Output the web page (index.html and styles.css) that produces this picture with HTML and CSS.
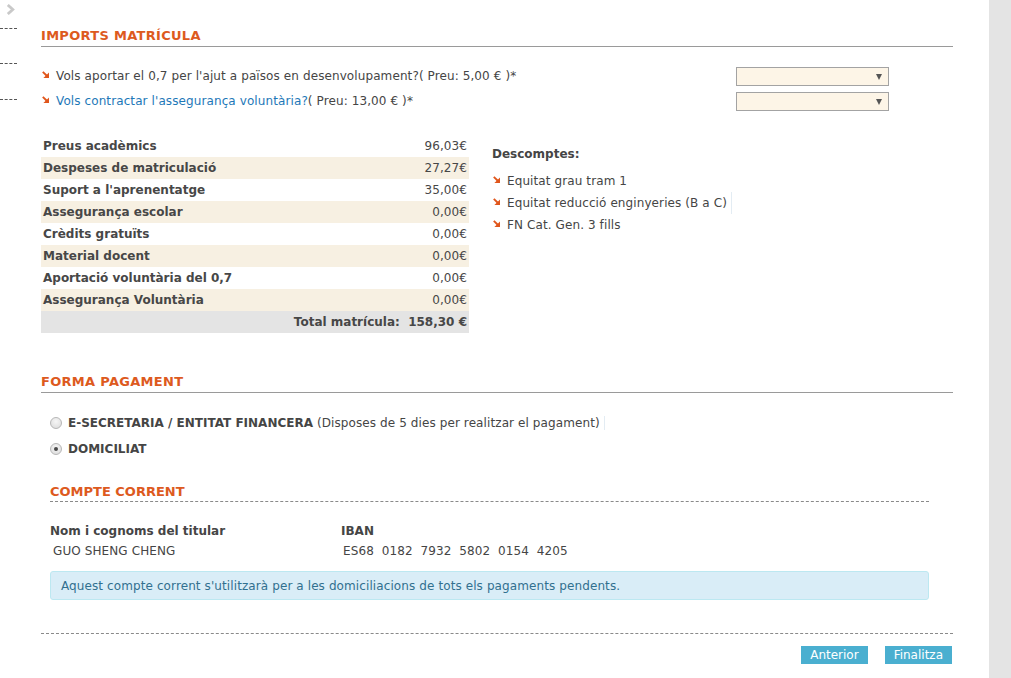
FILE: index.html
```html
<!DOCTYPE html>
<html lang="ca">
<head>
<meta charset="utf-8">
<title>Imports matrícula</title>
<link rel="stylesheet" href="styles.css">
</head>
<body>
<div class="page">
  <aside class="rail">
    <svg class="rail-chevron" width="9" height="11" viewBox="0 0 9 11"><path d="M1.8 1 L6.8 5.5 L1.8 10" fill="none" stroke="#c9c9c9" stroke-width="2.8"/></svg>
    <div class="rail-dash rail-dash-1"></div>
    <div class="rail-dash rail-dash-2"></div>
    <div class="rail-dash rail-dash-3"></div>
  </aside>

  <main class="main">
    <h2 class="section-title">IMPORTS MATRÍCULA</h2>

    <div class="question">
      <div class="question-text"><svg class="arrow" width="7" height="7" viewBox="0 0 7 7"><path d="M0.8 0.8 L5 5" stroke="#e0561c" stroke-width="1.9"/><path d="M7 1.4 L7 7 L1.4 7 Z" fill="#e0561c"/></svg>Vols aportar el 0,7 per l'ajut a països en desenvolupament?( Preu: 5,00 € )*</div>
      <div class="select"><span class="select-caret"></span></div>
    </div>
    <div class="question">
      <div class="question-text"><svg class="arrow" width="7" height="7" viewBox="0 0 7 7"><path d="M0.8 0.8 L5 5" stroke="#e0561c" stroke-width="1.9"/><path d="M7 1.4 L7 7 L1.4 7 Z" fill="#e0561c"/></svg><span class="link">Vols contractar l'assegurança voluntària?</span>( Preu: 13,00 € )*</div>
      <div class="select"><span class="select-caret"></span></div>
    </div>

    <div class="summary">
      <table class="prices">
        <tr><th>Preus acadèmics</th><td>96,03€</td></tr>
        <tr class="alt"><th>Despeses de matriculació</th><td>27,27€</td></tr>
        <tr><th>Suport a l'aprenentatge</th><td>35,00€</td></tr>
        <tr class="alt"><th>Assegurança escolar</th><td>0,00€</td></tr>
        <tr><th>Crèdits gratuïts</th><td>0,00€</td></tr>
        <tr class="alt"><th>Material docent</th><td>0,00€</td></tr>
        <tr><th>Aportació voluntària del 0,7</th><td>0,00€</td></tr>
        <tr class="alt"><th>Assegurança Voluntària</th><td>0,00€</td></tr>
        <tr class="total"><td colspan="2">Total matrícula:&nbsp; 158,30 €</td></tr>
      </table>

      <div class="discounts">
        <div class="discounts-title">Descomptes:</div>
        <ul class="discount-list">
          <li><svg class="arrow" width="7" height="7" viewBox="0 0 7 7"><path d="M0.8 0.8 L5 5" stroke="#e0561c" stroke-width="1.9"/><path d="M7 1.4 L7 7 L1.4 7 Z" fill="#e0561c"/></svg>Equitat grau tram 1</li>
          <li><svg class="arrow" width="7" height="7" viewBox="0 0 7 7"><path d="M0.8 0.8 L5 5" stroke="#e0561c" stroke-width="1.9"/><path d="M7 1.4 L7 7 L1.4 7 Z" fill="#e0561c"/></svg><span class="edge">Equitat reducció enginyeries (B a C)</span></li>
          <li><svg class="arrow" width="7" height="7" viewBox="0 0 7 7"><path d="M0.8 0.8 L5 5" stroke="#e0561c" stroke-width="1.9"/><path d="M7 1.4 L7 7 L1.4 7 Z" fill="#e0561c"/></svg>FN Cat. Gen. 3 fills</li>
        </ul>
      </div>
    </div>

    <h2 class="section-title section-title-pay">FORMA PAGAMENT</h2>

    <div class="radios">
      <label class="radio-row"><span class="radio"></span><span class="edge"><b>E-SECRETARIA / ENTITAT FINANCERA</b> (Disposes de 5 dies per realitzar el pagament)</span></label>
      <label class="radio-row"><span class="radio radio-checked"></span><b>DOMICILIAT</b></label>
    </div>

    <section class="account">
      <h3 class="account-title">COMPTE CORRENT</h3>
      <div class="account-grid">
        <div class="account-label">Nom i cognoms del titular</div>
        <div class="account-label">IBAN</div>
        <div class="account-value">GUO SHENG CHENG</div>
        <div class="account-value iban">ES68&nbsp; 0182&nbsp; 7932&nbsp; 5802&nbsp; 0154&nbsp; 4205</div>
      </div>
      <div class="info">Aquest compte corrent s'utilitzarà per a les domiciliacions de tots els pagaments pendents.</div>
    </section>

    <div class="actions">
      <button class="btn">Anterior</button>
      <button class="btn">Finalitza</button>
    </div>
  </main>

  <div class="gutter"></div>
  <div class="scrollbar"></div>
</div>
</body>
</html>
```

FILE: styles.css
```css
* { box-sizing: border-box; }

html, body {
  margin: 0;
  padding: 0;
  background: #fff;
}

body {
  font-family: "DejaVu Sans", Verdana, sans-serif;
  font-size: 12px;
  letter-spacing: 0.1px;
  color: #454545;
}

b, th, .account-label, .discounts-title {
  letter-spacing: 0;
}

.page {
  display: flex;
  width: 1011px;
  min-height: 678px;
}

.rail {
  width: 41px;
  flex: none;
}

.rail-chevron {
  display: block;
  margin: 4px 0 0 6px;
}

.rail-dash {
  width: 17px;
  border-top: 1px dashed #555;
}

.rail-dash-1 { margin-top: 13px; }
.rail-dash-2 { margin-top: 34px; }
.rail-dash-3 { margin-top: 35px; }

.main {
  width: 912px;
  flex: none;
  padding-bottom: 14px;
}

.gutter {
  width: 36px;
  flex: none;
}

.scrollbar {
  width: 22px;
  flex: none;
  background: #e4e4e4;
}

.section-title {
  margin: 28px 0 0;
  padding-bottom: 2px;
  font-size: 13px;
  line-height: 16px;
  letter-spacing: 0.3px;
  font-weight: bold;
  color: #dd5a1e;
  border-bottom: 1px solid #9a9a9a;
}

.question {
  display: flex;
  align-items: center;
  height: 25px;
}

.section-title + .question {
  margin-top: 16px;
}

.question-text {
  flex: 1;
  display: flex;
  align-items: flex-start;
}

.arrow {
  flex: none;
  margin: 2px 7px 0 1px;
}

.link {
  color: #1e78b8;
}

.select {
  width: 153px;
  height: 19px;
  margin: 1px 64px 0 0;
  border: 1px solid #a3a3a3;
  background: #fdf5e7;
  position: relative;
}

.select-caret {
  position: absolute;
  right: 6px;
  top: 6px;
  width: 0;
  height: 0;
  border-left: 3.5px solid transparent;
  border-right: 3.5px solid transparent;
  border-top: 6px solid #555;
}

.summary {
  display: flex;
  align-items: flex-start;
  margin-top: 22px;
}

.prices {
  width: 428px;
  border-collapse: collapse;
  flex: none;
}

.prices th,
.prices td {
  height: 22px;
  padding: 0 2px;
  color: #474747;
}

.prices th {
  text-align: left;
  font-weight: bold;
}

.prices td {
  text-align: right;
}

.prices .alt {
  background: #f7f0e2;
}

.prices .total {
  background: #e4e4e4;
}

.prices .total td {
  font-weight: bold;
  letter-spacing: 0;
}

.discounts {
  margin: 8px 0 0 23px;
}

.discounts-title {
  font-weight: bold;
  line-height: 22px;
}

.discount-list {
  list-style: none;
  margin: 5px 0 0;
  padding: 0;
}

.discount-list li {
  display: flex;
  align-items: flex-start;
  line-height: 22px;
}

.discount-list .arrow {
  margin-top: 6px;
}

.edge {
  border-right: 1px solid #e3ecf3;
  padding-right: 4px;
}

.section-title-pay {
  margin-top: 41px;
}

.radios {
  margin: 17px 0 0 9px;
}

.radio-row {
  display: flex;
  align-items: center;
  height: 26px;
}

.radio {
  width: 12px;
  height: 12px;
  border-radius: 50%;
  border: 1px solid #b7b7b7;
  background: radial-gradient(circle at 50% 35%, #f6f6f6 0%, #e2e2e2 70%, #d6d6d6 100%);
  margin-right: 6px;
  flex: none;
  position: relative;
}

.radio-checked::after {
  content: "";
  position: absolute;
  left: 3px;
  top: 3px;
  width: 4px;
  height: 4px;
  border-radius: 50%;
  background: #4a4a4a;
}

.account {
  margin: 22px 24px 0 9px;
}

.account-title {
  margin: 0;
  padding-bottom: 1px;
  font-size: 13px;
  line-height: 16px;
  letter-spacing: 0;
  font-weight: bold;
  color: #dd5a1e;
  border-bottom: 1px dashed #8a8a8a;
}

.account-grid {
  display: grid;
  grid-template-columns: 291px 1fr;
  margin-top: 19px;
}

.account-label {
  font-weight: bold;
  line-height: 20px;
}

.account-value {
  line-height: 20px;
  padding-left: 3px;
}

.iban {
  padding-left: 2px;
}

.info {
  margin-top: 10px;
  height: 29px;
  padding: 0 10px;
  display: flex;
  align-items: center;
  background: #d9edf7;
  border: 1px solid #bce8f1;
  border-radius: 3px;
  color: #31708f;
}

.actions {
  margin-top: 33px;
  border-top: 1px dashed #8a8a8a;
  padding-top: 12px;
  display: flex;
  justify-content: flex-end;
  gap: 17px;
  padding-right: 1px;
}

.btn {
  height: 18px;
  padding: 0 9px;
  border: 0;
  border-radius: 0;
  background: #4aafd0;
  color: #fff;
  font-family: inherit;
  font-size: 12px;
  letter-spacing: 0;
  line-height: 18px;
  cursor: pointer;
}
```
